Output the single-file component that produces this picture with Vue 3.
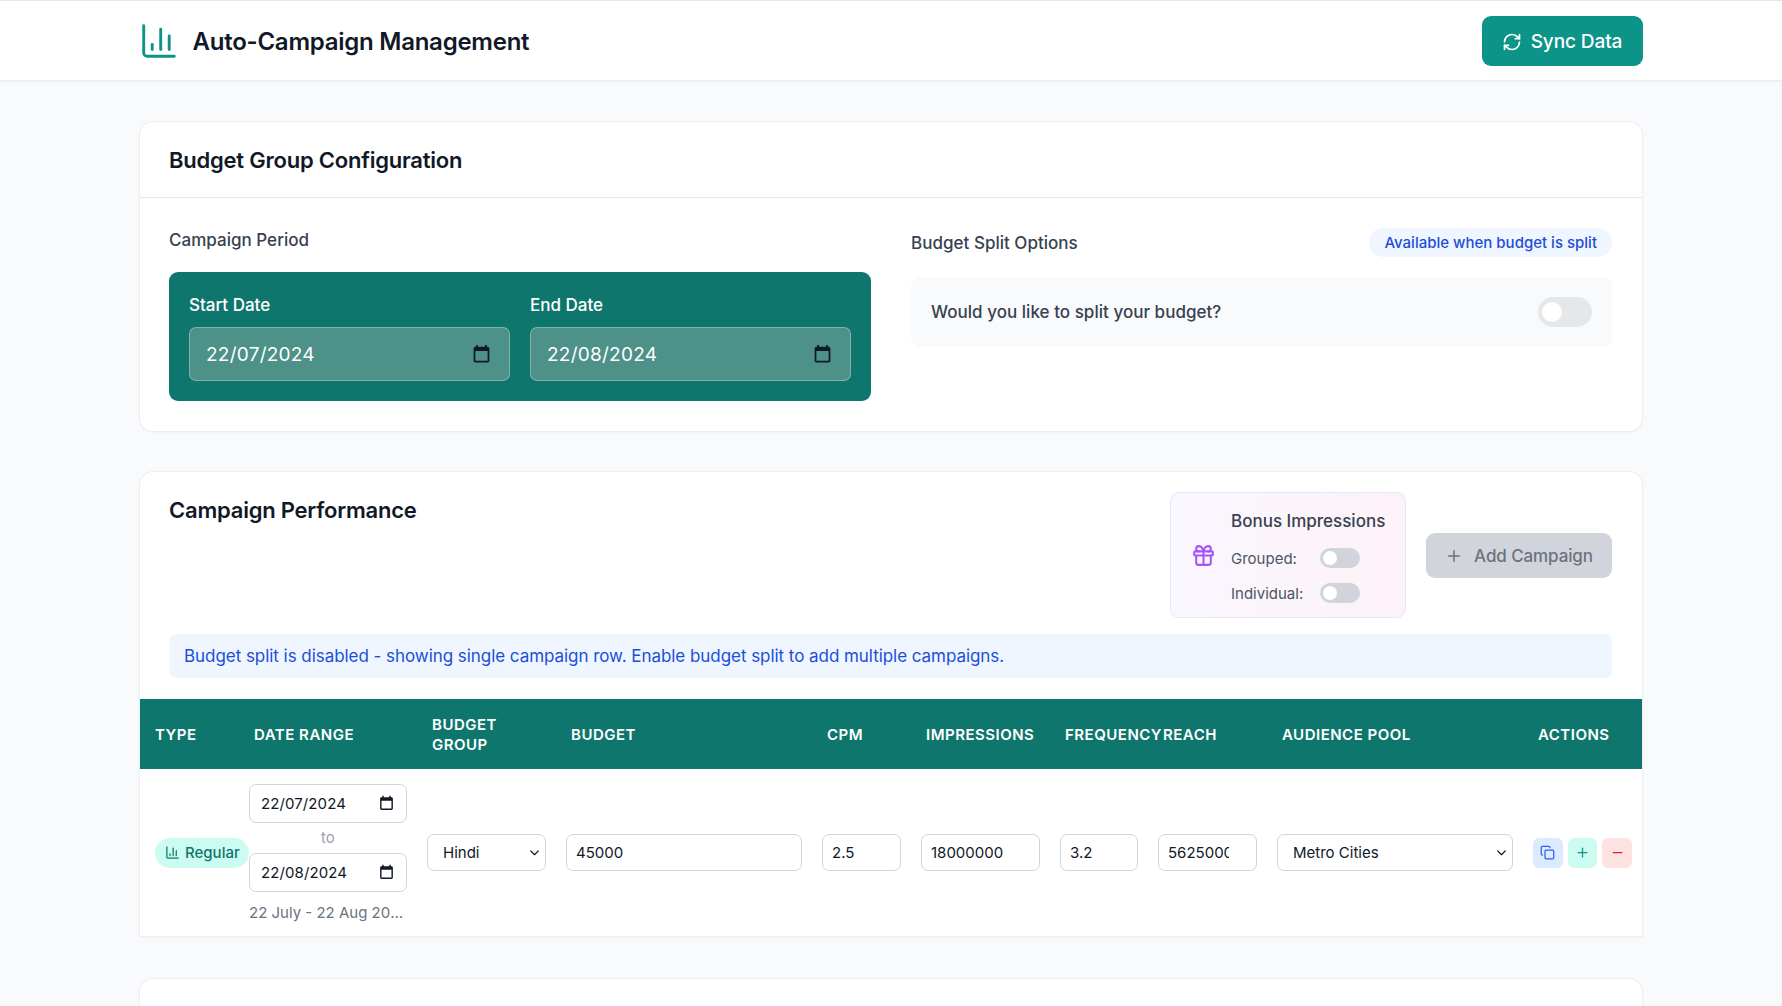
<script setup>
const columns = [
  { label: 'Type', width: 99 },
  { label: 'Date Range', width: 178 },
  { label: 'Budget Group', width: 139 },
  { label: 'Budget', width: 256 },
  { label: 'CPM', width: 99 },
  { label: 'Impressions', width: 139 },
  { label: 'Frequency', width: 98 },
  { label: 'Reach', width: 119 },
  { label: 'Audience Pool', width: 256 },
  { label: 'Actions', width: 119 }
]
const calendarPath = 'M19 3h-1V1h-2v2H8V1H6v2H5c-1.11 0-2 .9-2 2v14c0 1.1.89 2 2 2h14c1.1 0 2-.9 2-2V5c0-1.1-.9-2-2-2zm0 16H5V8h14v11z'
</script>

<template>
  <div class="page">
    <header class="topbar">
      <div class="topbar-inner">
        <div class="brand">
          <svg class="brand-icon" viewBox="2 2 20 20" fill="none" stroke="currentColor" stroke-width="1.7" stroke-linecap="round" stroke-linejoin="round">
            <path d="M3 3v16a2 2 0 0 0 2 2h16" /><path d="M18 17V9" /><path d="M13 17V5" /><path d="M8 17v-3" />
          </svg>
          <h1>Auto-Campaign Management</h1>
        </div>
        <button class="sync">
          <svg viewBox="0 0 24 24" fill="none" stroke="currentColor" stroke-width="2" stroke-linecap="round" stroke-linejoin="round">
            <path d="M3 12a9 9 0 0 1 9-9 9.75 9.75 0 0 1 6.74 2.74L21 8" /><path d="M21 3v5h-5" />
            <path d="M21 12a9 9 0 0 1-9 9 9.75 9.75 0 0 1-6.74-2.74L3 16" /><path d="M8 16H3v5" />
          </svg>
          Sync Data
        </button>
      </div>
    </header>

    <main class="content">
      <section class="card">
        <div class="card-head"><h2>Budget Group Configuration</h2></div>
        <div class="config">
          <div>
            <div class="section-label period-label">Campaign Period</div>
            <div class="period">
              <div class="period-field">
                <label>Start Date</label>
                <div class="period-input">
                  <span>22/07/2024</span>
                  <svg viewBox="0 0 24 24"><path :d="calendarPath" /></svg>
                </div>
              </div>
              <div class="period-field">
                <label>End Date</label>
                <div class="period-input">
                  <span>22/08/2024</span>
                  <svg viewBox="0 0 24 24"><path :d="calendarPath" /></svg>
                </div>
              </div>
            </div>
          </div>
          <div>
            <div class="split-head">
              <div class="section-label">Budget Split Options</div>
              <span class="pill-info">Available when budget is split</span>
            </div>
            <div class="split-panel">
              <span>Would you like to split your budget?</span>
              <span class="toggle toggle-lg"><i /></span>
            </div>
          </div>
        </div>
      </section>

      <section class="card perf">
        <div class="perf-head">
          <h2>Campaign Performance</h2>
          <div class="perf-tools">
            <div class="bonus">
              <svg class="gift" viewBox="0 0 24 24" fill="none" stroke="currentColor" stroke-width="2" stroke-linecap="round" stroke-linejoin="round">
                <rect x="3" y="8" width="18" height="4" rx="1" /><path d="M12 8v13" />
                <path d="M19 12v7a2 2 0 0 1-2 2H7a2 2 0 0 1-2-2v-7" />
                <path d="M7.5 8a2.5 2.5 0 0 1 0-5A4.8 8 0 0 1 12 8a4.8 8 0 0 1 4.5-5 2.5 2.5 0 0 1 0 5" />
              </svg>
              <div class="bonus-body">
                <div class="bonus-title">Bonus Impressions</div>
                <div class="bonus-row"><span>Grouped:</span><span class="toggle"><i /></span></div>
                <div class="bonus-row"><span>Individual:</span><span class="toggle"><i /></span></div>
              </div>
            </div>
            <button class="add">
              <svg viewBox="0 0 24 24" fill="none" stroke="currentColor" stroke-width="2" stroke-linecap="round"><path d="M5 12h14" /><path d="M12 5v14" /></svg>
              Add Campaign
            </button>
          </div>
        </div>
        <div class="notice">Budget split is disabled - showing single campaign row. Enable budget split to add multiple campaigns.</div>

        <table>
          <colgroup>
            <col v-for="c in columns" :key="c.label" :style="{ width: c.width + 'px' }" />
          </colgroup>
          <thead>
            <tr><th v-for="c in columns" :key="c.label">{{ c.label }}</th></tr>
          </thead>
          <tbody>
            <tr>
              <td>
                <span class="type-pill">
                  <svg viewBox="0 0 24 24" fill="none" stroke="currentColor" stroke-width="2" stroke-linecap="round" stroke-linejoin="round">
                    <path d="M3 3v16a2 2 0 0 0 2 2h16" /><path d="M18 17V9" /><path d="M13 17V5" /><path d="M8 17v-3" />
                  </svg>
                  Regular
                </span>
              </td>
              <td>
                <div class="date-cell">
                  <div class="date-input"><span>22/07/2024</span><svg viewBox="0 0 24 24"><path :d="calendarPath" /></svg></div>
                  <div class="to">to</div>
                  <div class="date-input"><span>22/08/2024</span><svg viewBox="0 0 24 24"><path :d="calendarPath" /></svg></div>
                  <div class="range-text">22 July - 22 Aug 2024</div>
                </div>
              </td>
              <td>
                <div class="select"><span>Hindi</span><svg viewBox="0 0 24 24" fill="none" stroke="currentColor" stroke-width="2.4" stroke-linecap="round" stroke-linejoin="round"><path d="m5 9 7 7 7-7" /></svg></div>
              </td>
              <td><input class="field" value="45000" /></td>
              <td><input class="field" value="2.5" /></td>
              <td><input class="field" value="18000000" /></td>
              <td><input class="field" value="3.2" /></td>
              <td><input class="field field-clip" value="5625000" /></td>
              <td>
                <div class="select select-wide"><span>Metro Cities</span><svg viewBox="0 0 24 24" fill="none" stroke="currentColor" stroke-width="2.4" stroke-linecap="round" stroke-linejoin="round"><path d="m5 9 7 7 7-7" /></svg></div>
              </td>
              <td>
                <div class="actions">
                  <button class="act act-copy">
                    <svg viewBox="0 0 24 24" fill="none" stroke="currentColor" stroke-width="2" stroke-linecap="round" stroke-linejoin="round"><rect x="8" y="8" width="14" height="14" rx="2" /><path d="M4 16c-1.1 0-2-.9-2-2V4c0-1.1.9-2 2-2h10c1.1 0 2 .9 2 2" /></svg>
                  </button>
                  <button class="act act-add">
                    <svg viewBox="0 0 24 24" fill="none" stroke="currentColor" stroke-width="2" stroke-linecap="round"><path d="M5 12h14" /><path d="M12 5v14" /></svg>
                  </button>
                  <button class="act act-remove">
                    <svg viewBox="0 0 24 24" fill="none" stroke="currentColor" stroke-width="2" stroke-linecap="round"><path d="M5 12h14" /></svg>
                  </button>
                </div>
              </td>
            </tr>
          </tbody>
        </table>
      </section>

      <section class="card card-next"></section>
    </main>
  </div>
</template>

<style>
html, body { margin: 0; overflow: hidden; background: #f9fafb; }
</style>

<style scoped>
.page {
  height: 1006px;
  overflow: hidden;
  background: #f9fafb;
  color: #111827;
  font-family: Inter, "Liberation Sans", sans-serif;
}
.topbar {
  height: 81px;
  box-sizing: border-box;
  background: #fff;
  border-top: 1px solid #ece6d6;
  border-bottom: 1px solid #eceef1;
  box-shadow: 0 1px 2px rgba(17, 24, 39, 0.04);
}
.topbar-inner {
  width: 1503px;
  margin: 0 auto;
  height: 100%;
  display: flex;
  align-items: center;
  justify-content: space-between;
}
.brand { display: flex; align-items: center; gap: 17px; }
.brand-icon { width: 34px; height: 34px; margin-left: 2px; color: #0d9488; }
h1 { margin: 1px 0 0; font-size: 24px; font-weight: 600; letter-spacing: -0.25px; color: #111827; }
.sync {
  width: 161px;
  height: 50px;
  margin-top: 1px;
  border: 0;
  border-radius: 9px;
  background: #0d9488;
  color: #fff;
  font: 500 19px Inter, sans-serif;
  letter-spacing: -0.1px;
  display: flex;
  align-items: center;
  justify-content: center;
  gap: 9px;
}
.sync svg { width: 20px; height: 20px; margin-top: 2px; }
.content {
  width: 1502px;
  margin: 41px auto 0;
  display: flex;
  flex-direction: column;
  gap: 41px;
}
.card {
  background: #fff;
  border-radius: 13px;
  box-shadow: 0 0 0 1px #eceef2, 0 1px 3px rgba(17, 24, 39, 0.06);
}
.card-head {
  height: 75px;
  padding: 0 30px 0 29px;
  display: flex;
  align-items: center;
  border-bottom: 1px solid #e5e7eb;
}
h2 { margin: 0; font-size: 22px; font-weight: 600; letter-spacing: -0.22px; color: #111827; }
.config {
  display: grid;
  grid-template-columns: 702px 701px;
  gap: 40px;
  padding: 29px 30px 0 29px;
  height: 204px;
}
.section-label { font-size: 17px; font-weight: 500; color: #374151; letter-spacing: 0.02px; }
.period-label { height: 45px; padding-top: 3px; box-sizing: border-box; }
.period {
  height: 129px;
  box-sizing: border-box;
  background: #0f766e;
  border-radius: 9px;
  padding: 20px;
  display: grid;
  grid-template-columns: 1fr 1fr;
  gap: 20px;
}
.period-field label { display: block; color: #fff; font-size: 17px; font-weight: 500; line-height: 24px; padding-top: 1px; margin-bottom: 10px; }
.period-input {
  height: 54px;
  box-sizing: border-box;
  border: 1px solid rgba(255, 255, 255, 0.3);
  border-radius: 7px;
  background: #4d9189;
  color: #fff;
  font-size: 19px;
  letter-spacing: 0.25px;
  padding: 0 16px;
  display: flex;
  align-items: center;
  justify-content: space-between;
}
.period-input svg { width: 21px; height: 21px; fill: #111827; margin-right: 1px; }
.split-head { display: flex; align-items: center; justify-content: space-between; height: 29px; margin-bottom: 20px; padding-top: 1px; }
.pill-info {
  height: 29px;
  line-height: 29px;
  padding: 0 15px;
  border-radius: 15px;
  background: #eff6ff;
  color: #1d4ed8;
  font-size: 15px;
  font-weight: 500;
}
.split-panel {
  height: 70px;
  box-sizing: border-box;
  padding: 0 20px;
  border-radius: 9px;
  background: #f9fafb;
  display: flex;
  align-items: center;
  justify-content: space-between;
  font-size: 17px;
  font-weight: 500;
  letter-spacing: 0.03px;
  color: #374151;
}
.toggle {
  width: 40px;
  height: 20px;
  border-radius: 10px;
  background: #d1d5db;
  display: flex;
  align-items: center;
  padding-left: 3px;
  box-sizing: border-box;
}
.toggle i { width: 14px; height: 14px; border-radius: 50%; background: #fff; }
.toggle-lg { width: 54px; height: 30px; border-radius: 15px; background: #e5e7eb; }
.toggle-lg i { width: 20px; height: 20px; margin-left: 1px; }
.perf-head {
  display: flex;
  justify-content: space-between;
  align-items: flex-start;
  padding: 20px 30px 16px 29px;
}
.perf-head h2 { margin-top: 5px; }
.perf-tools { display: flex; align-items: center; gap: 20px; }
.bonus {
  width: 236px;
  height: 126px;
  box-sizing: border-box;
  border: 1px solid #e8e6fb;
  border-radius: 9px;
  background: linear-gradient(90deg, #faf7fe, #fdf2f8);
  display: flex;
  align-items: center;
  padding: 0 0 0 20px;
  gap: 15px;
}
.gift { width: 25px; height: 25px; color: #a855f7; flex: none; }
.bonus-body { padding-top: 9px; }
.bonus-title { font-size: 17px; font-weight: 500; color: #374151; line-height: 24px; margin-bottom: 8px; white-space: nowrap; }
.bonus-row {
  height: 35px;
  display: flex;
  align-items: center;
  font-size: 15px;
  color: #4b5563;
}
.bonus-row > span:first-child { width: 89px; }
.add {
  width: 186px;
  height: 45px;
  padding: 1px 0 0;
  border: 0;
  border-radius: 9px;
  background: #d1d5db;
  color: #6b7280;
  font: 500 17px Inter, sans-serif;
  letter-spacing: -0.1px;
  display: flex;
  align-items: center;
  justify-content: center;
  gap: 11px;
}
.add svg { width: 18px; height: 18px; }
.notice {
  margin: 0 30px 21px 29px;
  height: 44px;
  line-height: 45px;
  padding: 0 15px;
  border-radius: 7px;
  background: #eff6ff;
  color: #1d4ed8;
  font-size: 17px;
  letter-spacing: -0.05px;
}
table { width: 1502px; table-layout: fixed; border-collapse: collapse; background: #fff; }
th {
  height: 70px;
  padding: 1px 15px 0;
  box-sizing: border-box;
  background: #0f766e;
  color: #fff;
  font-size: 15px;
  font-weight: 600;
  letter-spacing: 0.5px;
  line-height: 20px;
  text-align: left;
  text-transform: uppercase;
}
th:nth-child(7) { padding-right: 0; white-space: nowrap; }
td { height: 167px; padding: 0 10px; vertical-align: middle; box-sizing: border-box; }
td:first-child { padding-left: 15px; padding-right: 0; overflow: visible; white-space: nowrap; }
.type-pill {
  display: inline-flex;
  align-items: center;
  gap: 5px;
  height: 30px;
  width: 94px;
  box-sizing: border-box;
  padding: 0 10px;
  border-radius: 15px;
  background: #ccfbf1;
  color: #0f766e;
  font-size: 15px;
  font-weight: 500;
  position: relative;
}
.type-pill svg { width: 15px; height: 15px; flex: none; }
.date-cell { width: 158px; }
.date-input {
  height: 39px;
  box-sizing: border-box;
  border: 1px solid #d1d5db;
  border-radius: 7px;
  padding: 0 11px;
  display: flex;
  align-items: center;
  justify-content: space-between;
  font-size: 15px;
  letter-spacing: 0.1px;
  color: #111827;
}
.date-input svg { width: 17px; height: 17px; fill: #111827; }
.to { height: 30px; line-height: 30px; text-align: center; font-size: 15px; color: #9ca3af; }
.range-text {
  margin-top: 11px;
  width: 156px;
  overflow: hidden;
  white-space: nowrap;
  text-overflow: ellipsis;
  font-size: 15px;
  color: #6b7280;
}
.select {
  height: 37px;
  box-sizing: border-box;
  border: 1px solid #d1d5db;
  border-radius: 7px;
  padding: 0 4px 0 15px;
  display: flex;
  align-items: center;
  justify-content: space-between;
  font-size: 15px;
  color: #111827;
}
.select svg { width: 13px; height: 13px; }
.field {
  display: block;
  width: 100%;
  height: 37px;
  box-sizing: border-box;
  border: 1px solid #d1d5db;
  border-radius: 7px;
  padding: 0 9px;
  font: 400 15px Inter, sans-serif;
  color: #111827;
  outline: none;
}
.field-clip { padding-right: 27px; }
.actions { display: flex; gap: 5px; }
.act {
  width: 30px;
  height: 30px;
  padding: 0;
  border: 0;
  border-radius: 6px;
  display: flex;
  align-items: center;
  justify-content: center;
}
.act svg { width: 15px; height: 15px; }
.act-copy { background: #dbeafe; color: #2563eb; }
.act-add { background: #ccfbf1; color: #0d9488; }
.act-remove { background: #fee2e2; color: #dc2626; }
.perf { border-radius: 13px 13px 0 0; }
.card-next { height: 200px; flex: none; margin-top: 2px; }
</style>
